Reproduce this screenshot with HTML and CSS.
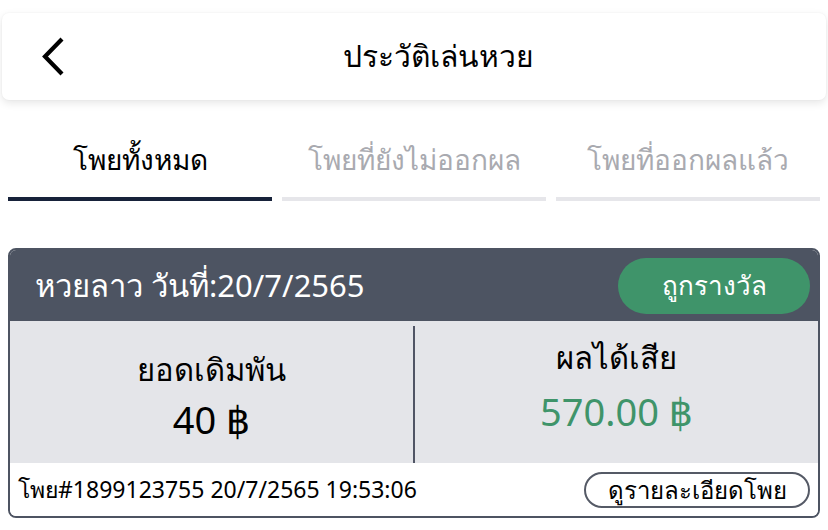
FILE: index.html
```html
<!DOCTYPE html>
<html lang="th">
<head>
<meta charset="utf-8">
<link rel="stylesheet" href="styles.css">
</head>
<body>
<div class="page">
  <header class="topbar">
    <button class="back" aria-label="back">
      <svg width="26" height="40" viewBox="0 0 26 40"><path d="M22 2 L5 19.5 L22 37" fill="none" stroke="#000" stroke-width="4.2"/></svg>
    </button>
    <h1 class="title">ประวัติเล่นหวย</h1>
  </header>

  <nav class="tabs">
    <div class="tab active"><span class="tab-label">โพยทั้งหมด</span><span class="bar"></span></div>
    <div class="tab"><span class="tab-label">โพยที่ยังไม่ออกผล</span><span class="bar"></span></div>
    <div class="tab"><span class="tab-label">โพยที่ออกผลแล้ว</span><span class="bar"></span></div>
  </nav>

  <section class="card">
    <div class="card-head">
      <span class="card-title">หวยลาว วันที่:20/7/2565</span>
      <span class="badge">ถูกรางวัล</span>
    </div>
    <div class="card-body">
      <div class="stat">
        <div class="stat-label">ยอดเดิมพัน</div>
        <div class="stat-value">40 ฿</div>
      </div>
      <div class="divider"></div>
      <div class="stat stat-right">
        <div class="stat-label">ผลได้เสีย</div>
        <div class="stat-value win">570.00 ฿</div>
      </div>
    </div>
    <div class="card-foot">
      <span class="ticket">โพย#1899123755 20/7/2565 19:53:06</span>
      <button class="detail">ดูรายละเอียดโพย</button>
    </div>
  </section>
</div>
</body>
</html>
```

FILE: styles.css
```css
* { box-sizing: border-box; }
html, body { margin: 0; padding: 0; background: #fff; }
body {
  font-family: "Noto Sans", "DejaVu Sans", sans-serif;
  color: #000;
  width: 828px;
  height: 530px;
  overflow: hidden;
}
.page { padding: 13px 2px 0 2px; }
.topbar {
  height: 87px;
  background: #fff;
  border-radius: 7px;
  box-shadow: 0 3px 8px rgba(0,0,0,0.10), 0 0 2px rgba(0,0,0,0.05);
  display: flex;
  align-items: center;
}
.back {
  border: 0;
  background: none;
  padding: 0;
  margin-left: 38px;
  width: 30px;
  height: 40px;
  display: flex;
  align-items: center;
}
.title {
  flex: 1;
  margin: 0 20px 0 0;
  text-align: center;
  font-size: 30px;
  font-weight: 400;
}
.tabs {
  display: flex;
  gap: 10px;
  padding: 0 6px;
  margin-top: 35px;
}
.tab {
  flex: 1;
  display: flex;
  flex-direction: column;
  align-items: center;
}
.tab-label {
  font-size: 28px;
  color: #a9aab0;
  height: 62px;
  line-height: 48px;
}
.tab.active .tab-label { color: #000; }
.bar {
  width: 100%;
  height: 4px;
  background: #e6e6ea;
}
.tab.active .bar { background: #17223a; }
.card {
  margin: 47px 6px 0 6px;
  border: 2px solid #4d5462;
  border-radius: 8px;
  overflow: hidden;
}
.card-head {
  background: #4d5462;
  height: 71px;
  display: flex;
  align-items: center;
  justify-content: space-between;
  padding: 0 8px 0 25px;
}
.card-title { color: #fff; font-size: 31px; }
.badge {
  background: #3f946a;
  color: #fff;
  font-size: 26px;
  width: 192px;
  height: 56px;
  border-radius: 28px;
  display: flex;
  align-items: center;
  justify-content: center;
}
.card-body {
  background: #e4e5e9;
  height: 142px;
  display: flex;
  align-items: stretch;
  padding-top: 5px;
}
.stat {
  flex: 1;
  display: flex;
  flex-direction: column;
  align-items: center;
  padding-top: 21px;
}
.stat-right { padding-top: 9px; }
.stat-label { font-size: 31px; line-height: 44px; }
.stat-value { font-size: 38px; line-height: 56px; }
.stat-right .stat-value { margin-top: 4px; }
.win { color: #3f946a; }
.divider { width: 2px; background: #505565; }
.card-foot {
  background: #fff;
  height: 53px;
  display: flex;
  align-items: center;
  justify-content: space-between;
  padding: 0 8px 0 8px;
}
.ticket { font-size: 23px; }
.detail {
  font-family: inherit;
  font-size: 24px;
  line-height: 30px;
  background: #fff;
  border: 2px solid #555a66;
  border-radius: 18px;
  width: 226px;
  height: 36px;
  padding: 0;
  color: #000;
}
```
